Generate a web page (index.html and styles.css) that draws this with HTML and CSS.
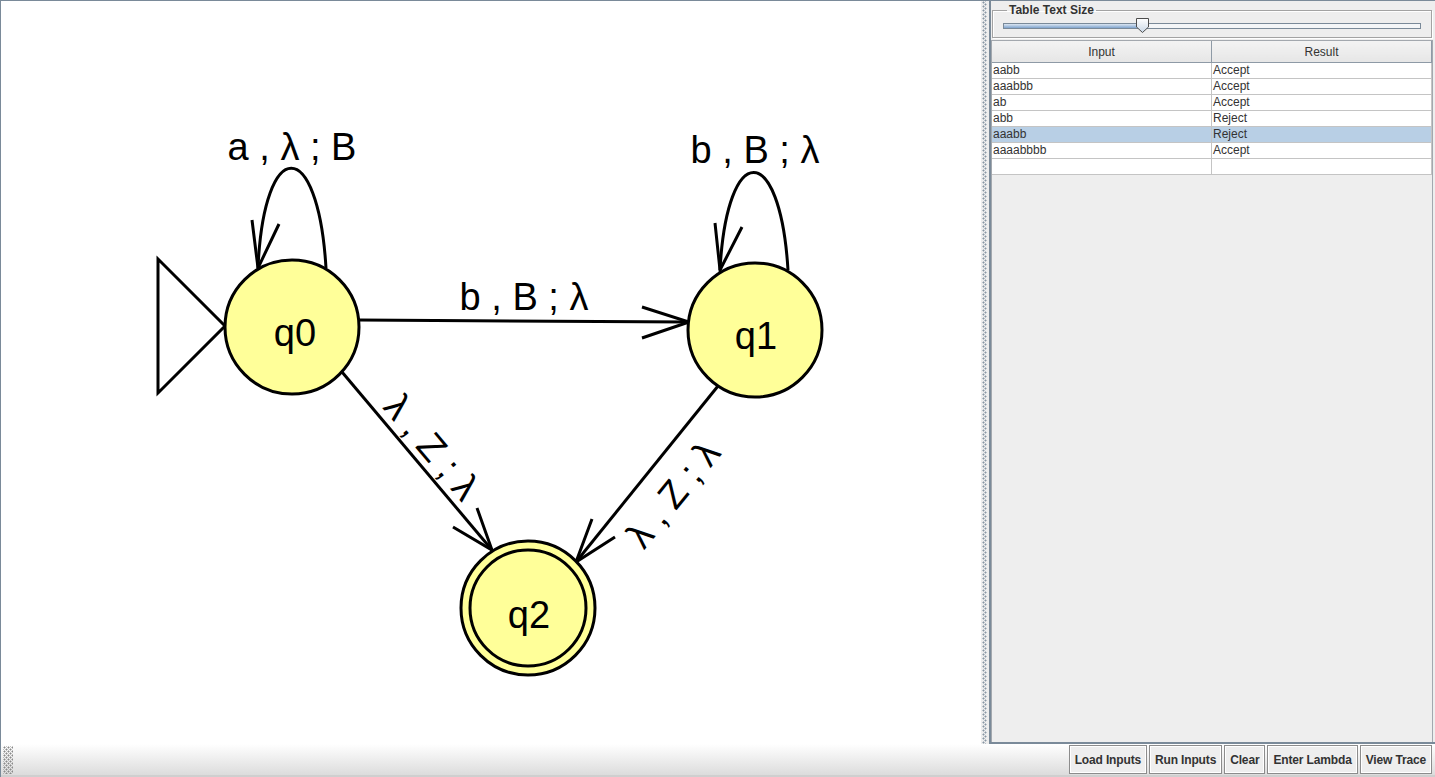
FILE: index.html
```html
<!DOCTYPE html>
<html lang="en">
  <head>
    <meta charset="UTF-8" />
    <title>Multiple Run (PDA)</title>
    <link rel="stylesheet" href="styles.css">
  </head>
  <body>
    <div class="window">
      <div class="main">
        <div class="canvas">
          <svg class="diagram" width="980" height="743" viewBox="1 1 980 743">
            <!-- start arrow -->
            <polygon class="start" points="158,259 158,393 225,326" />

            <!-- transitions -->
            <path class="edge" d="M258 268 C 264 135, 318 135, 326 268" />
            <path class="edge" d="M715 223 L720 270 L742 227" />
            <path class="edge" d="M252 220 L258 268 L279 224" />
            <path class="edge" d="M720 270 C 727 140, 780 140, 788 270" />
            <line class="edge" x1="359" y1="320" x2="689" y2="322" />
            <path class="edge" d="M642 307 L689 322 L642 338" />
            <line class="edge" x1="342" y1="372" x2="492" y2="550" />
            <path class="edge" d="M453 527 L492 550 L477 508" />
            <line class="edge" x1="718" y1="386" x2="576" y2="562" />
            <path class="edge" d="M592 519 L576 562 L615 537" />

            <text class="label" x="292" y="160">a , λ ; B</text>
            <text class="label" x="755" y="163">b , B ; λ</text>
            <text class="label" x="524" y="310">b , B ; λ</text>
            <text class="label" transform="translate(432,447) rotate(50)" y="13">λ , Z ; λ</text>
            <text class="label" transform="translate(673,494) rotate(-51)" y="13">λ , Z ; λ</text>

            <!-- states -->
            <circle class="state" cx="292" cy="327" r="67" />
            <circle class="state" cx="755" cy="330" r="67" />
            <circle class="state" cx="528" cy="608" r="67" />
            <circle class="state" cx="528" cy="608" r="58" />

            <text class="label" x="295" y="346">q0</text>
            <text class="label" x="756" y="349">q1</text>
            <text class="label" x="529" y="628">q2</text>
          </svg>
        </div>
        <div class="divider"></div>
        <div class="panel">
          <fieldset class="size-box">
            <legend>Table Text Size</legend>
            <div class="slider">
              <div class="track"><div class="fill"></div></div>
              <svg class="thumb" width="15" height="17" viewBox="0 0 15 17">
                <defs>
                  <linearGradient id="thumbFill" x1="0" y1="0" x2="0" y2="1">
                    <stop offset="0" stop-color="#ffffff" />
                    <stop offset="1" stop-color="#c9d7e6" />
                  </linearGradient>
                </defs>
                <polygon points="1.5,1.5 13.5,1.5 13.5,10 7.5,15.5 1.5,10" fill="url(#thumbFill)" stroke="#4d4d4d" />
              </svg>
            </div>
          </fieldset>
          <div class="table-pane">
            <table class="results">
              <thead>
                <tr><th class="col-input">Input</th><th>Result</th></tr>
              </thead>
              <tbody>
                <tr><td>aabb</td><td>Accept</td></tr>
                <tr><td>aaabbb</td><td>Accept</td></tr>
                <tr><td>ab</td><td>Accept</td></tr>
                <tr><td>abb</td><td>Reject</td></tr>
                <tr class="selected"><td>aaabb</td><td>Reject</td></tr>
                <tr><td>aaaabbbb</td><td>Accept</td></tr>
                <tr><td></td><td></td></tr>
              </tbody>
            </table>
          </div>
        </div>
      </div>
      <div class="toolbar">
        <div class="grip"></div>
        <div class="buttons">
          <button>Load Inputs</button>
          <button>Run Inputs</button>
          <button>Clear</button>
          <button>Enter Lambda</button>
          <button>View Trace</button>
        </div>
      </div>
    </div>
  </body>
</html>
```

FILE: styles.css
```css
body {
  margin: 0;
  width: 1435px;
  height: 777px;
  overflow: hidden;
  background: #eeeeee;
  font-family: "Liberation Sans", Arial, sans-serif;
}

.window {
  height: 777px;
  box-sizing: border-box;
  border-top: 1px solid #7a8a99;
  border-left: 1px solid #7a8a99;
  display: flex;
  flex-direction: column;
}

.main {
  display: flex;
  height: 743px;
}

.canvas {
  width: 980px;
  background: #ffffff;
}

.diagram {
  display: block;
}

.start {
  fill: #ffffff;
  stroke: #000000;
  stroke-width: 3;
}

.edge {
  fill: none;
  stroke: #000000;
  stroke-width: 3;
}

.state {
  fill: #ffff99;
  stroke: #000000;
  stroke-width: 3;
}

.label {
  font-family: "Liberation Sans", Arial, sans-serif;
  font-size: 38px;
  text-anchor: middle;
  fill: #000000;
}

.divider {
  width: 8px;
  background-color: #eeeeee;
  background-image:
    radial-gradient(circle at 1.5px 1.5px, #8796a4 0.9px, transparent 1.1px),
    radial-gradient(circle at 1.5px 1.5px, #8796a4 0.9px, transparent 1.1px);
  background-size: 4px 4px, 4px 4px;
  background-position: 1px 0, 3px 2px;
  background-repeat: repeat-y;
}

.panel {
  flex: 1;
  display: flex;
  flex-direction: column;
  border-left: 2px solid #7a8a99;
  border-bottom: 2px solid #7a8a99;
  background: #eeeeee;
  color: #333333;
}

.size-box {
  margin: 2px 3px 0 1px;
  padding: 0 10px 1px;
  border: 1px solid #a3a3a3;
  box-shadow: inset 1px 1px 0 #ffffff, 1px 1px 0 #ffffff;
  min-width: 0;
}

.size-box legend {
  font-size: 12px;
  font-weight: bold;
  line-height: 14px;
  padding: 0 2px;
  margin-left: 4px;
  color: #333333;
}

.slider {
  position: relative;
  height: 19px;
  display: flex;
  align-items: center;
}

.track {
  flex: 1;
  height: 4px;
  border: 1px solid #7a8a99;
  background: #f4f6f8;
  margin-top: -2px;
}

.fill {
  width: 136px;
  height: 100%;
  background: linear-gradient(#dbe6f2, #7fa3cc);
}

.thumb {
  position: absolute;
  left: 132px;
  top: 0;
}

.table-pane {
  flex: 1;
  margin: 2px 2px 0 0;
  border: 1px solid #a3a8ae;
  border-bottom: none;
  background: #eeeeee;
}

.results {
  width: 100%;
  border-collapse: collapse;
  table-layout: fixed;
  font-size: 12px;
}

.results th {
  height: 21px;
  padding: 0;
  font-weight: normal;
  background: linear-gradient(#f3f3f3, #e6e6e6);
  border-right: 1px solid #8e9aa6;
  border-bottom: 1px solid #8e9aa6;
  color: #333333;
}

.results .col-input {
  width: 219px;
}

.results td {
  height: 15px;
  padding: 0 1px;
  background: #ffffff;
  border: 1px solid #c4c4c4;
  border-top: none;
  line-height: 15px;
  color: #333333;
  white-space: nowrap;
}

.results td:first-child {
  border-left: none;
}

.results .selected td {
  background: #b8cfe5;
}

.toolbar {
  flex: 1;
  display: flex;
  justify-content: space-between;
  align-items: center;
  background: linear-gradient(#ffffff, #dcdcdc);
  border-bottom: 2px solid #cfcfcf;
}

.grip {
  width: 10px;
  height: 28px;
  margin-left: 2px;
  background-image:
    radial-gradient(circle at 1.5px 1.5px, #8a8a8a 0.9px, transparent 1.1px),
    radial-gradient(circle at 1.5px 1.5px, #8a8a8a 0.9px, transparent 1.1px);
  background-size: 4px 4px, 4px 4px;
  background-position: 0 0, 2px 2px;
}

.buttons {
  display: flex;
  gap: 2px;
  margin-right: 3px;
}

button {
  height: 29px;
  padding: 0 5px;
  border: 1px solid #8c8c8c;
  box-shadow: inset 0 0 0 1px #ffffff;
  background: #eeeeee;
  font-family: "Liberation Sans", Arial, sans-serif;
  font-size: 12px;
  font-weight: bold;
  letter-spacing: -0.15px;
  color: #333333;
}
```
